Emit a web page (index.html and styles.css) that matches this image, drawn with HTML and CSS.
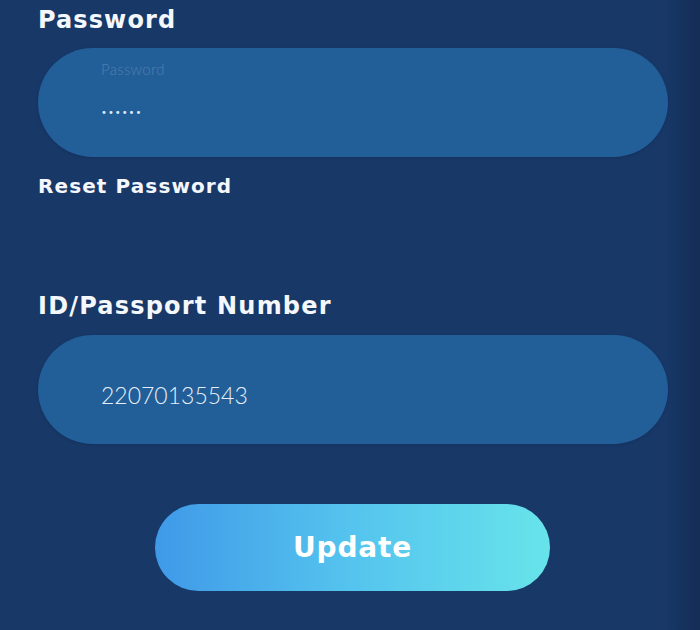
FILE: index.html
```html
<!DOCTYPE html>
<html lang="en">
<head>
<meta charset="utf-8">
<title>Profile</title>
<link rel="stylesheet" href="styles.css">
</head>
<body>
<main class="page">
  <section class="field">
    <label class="label">Password</label>
    <div class="input input-pass">
      <span class="placeholder">Password</span>
      <span class="dots">••••••</span>
    </div>
    <a class="reset">Reset Password</a>
  </section>
  <section class="field field-id">
    <label class="label label-id">ID/Passport Number</label>
    <div class="input input-id">
      <span class="value">22070135543</span>
    </div>
  </section>
  <div class="actions">
    <button class="btn">Update</button>
  </div>
</main>
</body>
</html>
```

FILE: styles.css
```css
html, body {
  margin: 0;
  padding: 0;
}
body {
  width: 700px;
  height: 630px;
  overflow: hidden;
  background: linear-gradient(90deg, #183868 0%, #183868 95%, #132d55 100%);
  font-family: "DejaVu Sans", "Open Sans", sans-serif;
  color: #fff;
}
.page {
  padding: 4px 32px 0 38px;
  display: flex;
  flex-direction: column;
}
.field {
  display: flex;
  flex-direction: column;
}
.label {
  font-weight: bold;
  font-size: 24px;
  line-height: 32px;
  letter-spacing: 1.1px;
  color: #f4f7fb;
}
.input {
  margin-top: 12px;
  height: 109px;
  border-radius: 55px;
  background: #225e97;
  box-sizing: border-box;
  padding-left: 63px;
  display: flex;
  flex-direction: column;
  justify-content: center;
  box-shadow: 0 1px 3px rgba(10, 30, 60, 0.25);
}
.input-pass {
  justify-content: flex-start;
  padding-top: 12px;
}
.placeholder {
  font-family: "Lato", sans-serif;
  font-weight: 300;
  font-size: 15px;
  line-height: 18px;
  color: #4f7fb0;
  letter-spacing: 0.3px;
}
.dots {
  margin-top: 28px;
  font-size: 10px;
  line-height: 14px;
  letter-spacing: 1px;
  color: #dbe9f8;
}
.reset {
  margin-top: 16px;
  font-weight: bold;
  font-size: 20px;
  line-height: 26px;
  letter-spacing: 1.1px;
  color: #f4f7fb;
}
.field-id {
  margin-top: 91px;
}
.label-id {
  font-size: 24px;
  letter-spacing: 1.2px;
}
.input-id {
  margin-top: 13px;
}
.value {
  font-family: "Lato", sans-serif;
  font-weight: 300;
  font-size: 23px;
  line-height: 26px;
  color: #e6eff9;
  letter-spacing: 0px;
  margin-top: 10px;
}
.actions {
  margin-top: 60px;
  padding-left: 117px;
}
.btn {
  width: 395px;
  height: 87px;
  border: 0;
  border-radius: 44px;
  background: linear-gradient(90deg, #3f99e8 0%, #55c4ee 50%, #67e4ea 100%);
  color: #fff;
  font-family: "DejaVu Sans", sans-serif;
  font-weight: bold;
  font-size: 28px;
  letter-spacing: 0.8px;
  padding: 0;
}
```
